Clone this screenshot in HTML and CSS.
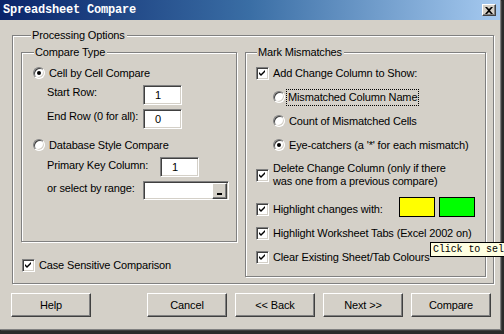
FILE: index.html
```html
<!DOCTYPE html>
<html lang="en">
  <head>
    <meta charset="UTF-8" />
    <title>Spreadsheet Compare</title>
    <link rel="stylesheet" href="styles.css">
  </head>
  <body>
    <div class="window">
      <div class="titlebar">
        <span class="title">Spreadsheet Compare</span>
        <span class="close">
          <svg width="8" height="7" viewBox="0 0 8 7">
            <path d="M0 0h2l2 2l2-2h2l-3 3.5l3 3.5h-2l-2-2l-2 2h-2l3-3.5z" fill="#000" />
          </svg>
        </span>
      </div>

      <div class="client">
        <fieldset class="group outer">
          <legend>Processing Options</legend>
          <div class="columns">
            <div class="left-col">
              <fieldset class="group compare-type">
                <legend>Compare Type</legend>

                <div class="opt first">
                  <span class="radio checked"></span>
                  <span>Cell by Cell Compare</span>
                </div>
                <div class="field">
                  <span class="caption">Start Row:</span>
                  <span class="edit">1</span>
                </div>
                <div class="field">
                  <span class="caption">End Row (0 for all):</span>
                  <span class="edit">0</span>
                </div>

                <div class="opt db">
                  <span class="radio"></span>
                  <span>Database Style Compare</span>
                </div>
                <div class="field">
                  <span class="caption wide">Primary Key Column:</span>
                  <span class="edit">1</span>
                </div>
                <div class="field">
                  <span class="caption">or select by range:</span>
                  <span class="edit range"><span class="ref-btn"><i></i></span></span>
                </div>
              </fieldset>

              <div class="opt case">
                <span class="check checked"></span>
                <span>Case Sensitive Comparison</span>
              </div>
            </div>

            <fieldset class="group mismatches">
              <legend>Mark Mismatches</legend>

              <div class="opt add">
                <span class="check checked"></span>
                <span>Add Change Column to Show:</span>
              </div>
              <div class="opt sub">
                <span class="radio"></span>
                <span class="focus">Mismatched Column Name</span>
              </div>
              <div class="opt sub">
                <span class="radio"></span>
                <span class="txt">Count of Mismatched Cells</span>
              </div>
              <div class="opt sub">
                <span class="radio checked"></span>
                <span class="txt">Eye-catchers (a '*' for each mismatch)</span>
              </div>

              <div class="opt two-line">
                <span class="check checked"></span>
                <span>Delete Change Column (only if there<br>was one from a previous compare)</span>
              </div>

              <div class="opt colours">
                <span class="check checked"></span>
                <span class="grow">Highlight changes with:</span>
                <span class="swatch" style="background: #ffff00"></span>
                <span class="swatch" style="background: #00ff00"></span>
              </div>
              <div class="opt tabs">
                <span class="check checked"></span>
                <span>Highlight Worksheet Tabs (Excel 2002 on)</span>
              </div>
              <div class="opt clear">
                <span class="check checked"></span>
                <span>Clear Existing Sheet/Tab Colours</span>
              </div>
            </fieldset>
          </div>
        </fieldset>

        <div class="buttons">
          <button type="button" class="help">Help</button>
          <button type="button" class="cancel">Cancel</button>
          <button type="button">&lt;&lt; Back</button>
          <button type="button">Next &gt;&gt;</button>
          <button type="button">Compare</button>
        </div>
      </div>

      <div class="tooltip">Click to sel</div>
    </div>
  </body>
</html>
```

FILE: styles.css
```css
html,
body {
  margin: 0;
  overflow: hidden;
  background-color: #2b2b2b;
}

body {
  width: 504px;
  height: 334px;
  font-family: "Liberation Sans", Arial, sans-serif;
  font-size: 11px;
  letter-spacing: -0.15px;
  color: #000;
}

.window {
  position: relative;
  width: 500px;
  height: 329px;
  background-color: #d4d0c8;
  border-right: 1px solid #808080;
  border-bottom: 1px solid #808080;
  box-shadow: 1px 1px 0 #404040;
}

/* title bar */
.titlebar {
  height: 20px;
  display: flex;
  align-items: flex-start;
  justify-content: space-between;
  background: linear-gradient(90deg, #0a246a 0%, #3a6ea5 50%, #a6caf0 100%);
}

.title {
  margin: 3px 0 0 3px;
  font-family: "Liberation Mono", monospace;
  font-weight: bold;
  font-size: 12px;
  line-height: 14px;
  color: #fff;
  letter-spacing: -0.2px;
}

.close {
  width: 14px;
  height: 12px;
  margin: 4px 4px 0 0;
  box-sizing: border-box;
  display: flex;
  align-items: center;
  justify-content: center;
  background-color: #d4d0c8;
  border: 1px solid;
  border-color: #fff #404040 #404040 #fff;
  box-shadow: inset -1px -1px 0 #808080;
}

/* group boxes */
.client {
  padding: 9px 0 0 12px;
}

.group {
  margin: 0;
  min-width: 0;
  box-sizing: border-box;
  border: 1px solid #808080;
  box-shadow: inset 1px 1px 0 #fff, 1px 1px 0 #fff;
}

.group legend {
  padding: 0 2px 0 1px;
  line-height: 13px;
  background-color: #d4d0c8;
}

.outer {
  width: 482px;
  padding: 4px 7px 6px 8px;
}

.outer > legend {
  margin-left: 10px;
}

.columns {
  display: grid;
  grid-template-columns: 216px 241px;
  column-gap: 8px;
  align-items: start;
}

.compare-type {
  padding: 0 0 41px 0;
}

.compare-type > legend {
  margin-left: 12px;
}

.mismatches {
  padding: 0 0 11px 0;
}

.mismatches > legend {
  margin-left: 11px;
}

/* option rows */
.opt {
  display: flex;
  align-items: center;
  height: 16px;
  line-height: 13px;
  white-space: nowrap;
}

.radio {
  position: relative;
  width: 12px;
  height: 12px;
  flex: none;
  box-sizing: border-box;
  margin-right: 4px;
  border-radius: 50%;
  background-color: #fff;
  border: 1px solid;
  border-color: #808080 #fff #fff #808080;
  box-shadow: inset 1px 1px 0 #404040, inset -1px -1px 0 #d4d0c8;
}

.radio.checked::after {
  content: "";
  position: absolute;
  left: 3px;
  top: 3px;
  width: 4px;
  height: 4px;
  border-radius: 50%;
  background-color: #000;
}

.check {
  width: 13px;
  height: 13px;
  flex: none;
  box-sizing: border-box;
  margin-right: 4px;
  background-color: #fff;
  border: 1px solid;
  border-color: #808080 #fff #fff #808080;
  box-shadow: inset 1px 1px 0 #404040, inset -1px -1px 0 #d4d0c8;
}

.check.checked {
  background: #fff url("data:image/svg+xml,%3Csvg xmlns='http://www.w3.org/2000/svg' width='11' height='11'%3E%3Cpath d='M2 4v2l2 2l4-4v-2l-4 4z' fill='black'/%3E%3C/svg%3E") no-repeat 0 0;
}

/* left column */
.compare-type .opt {
  padding-left: 11px;
}

.compare-type .first {
  margin-top: 6px;
}

.compare-type .db {
  margin-top: 8px;
}

.field {
  display: flex;
  align-items: flex-start;
  margin-top: 4px;
  padding-left: 25px;
}

.caption {
  width: 96px;
  line-height: 14px;
  white-space: nowrap;
}

.caption.wide {
  width: 113px;
  line-height: 16px;
}

.edit {
  position: relative;
  width: 39px;
  height: 20px;
  box-sizing: border-box;
  padding-left: 11px;
  line-height: 18px;
  background-color: #fff;
  border: 1px solid;
  border-color: #808080 #fff #fff #808080;
  box-shadow: inset 1px 1px 0 #404040, inset -1px -1px 0 #d4d0c8;
}

.edit.range {
  width: 86px;
  height: 19px;
  display: flex;
  justify-content: flex-end;
  padding: 1px 1px 0 0;
}

.ref-btn {
  width: 15px;
  height: 16px;
  box-sizing: border-box;
  display: flex;
  align-items: flex-end;
  justify-content: center;
  padding-bottom: 3px;
  background-color: #d4d0c8;
  border: 1px solid;
  border-color: #fff #404040 #404040 #fff;
  box-shadow: inset -1px -1px 0 #808080;
}

.ref-btn i {
  width: 5px;
  height: 2px;
  background-color: #000;
}

.case {
  margin-top: 15px;
  padding-left: 1px;
}

/* right column */
.mismatches .opt {
  padding-left: 10px;
}

.mismatches .add {
  margin-top: 6px;
}

.mismatches .sub {
  margin-top: 8px;
  padding-left: 27px;
}

.sub .radio {
  margin-right: 1px;
}

.sub .txt {
  padding-left: 3px;
}

.focus {
  padding: 1px;
  border: 1px dotted #000;
}

.two-line {
  height: 26px;
  margin-top: 9px;
}

.colours {
  height: 24px;
  margin-top: 9px;
  align-items: flex-start;
}

.colours .check {
  margin-top: 6px;
}

.colours .grow {
  width: 126px;
  margin-top: 6px;
}

.swatch {
  width: 36px;
  height: 20px;
  box-sizing: border-box;
  margin-right: 4px;
  border: 1px solid #000;
}

.tabs {
  margin-top: 4px;
}

.clear {
  margin-top: 8px;
}

/* buttons */
.buttons {
  display: flex;
  gap: 8px;
  margin-top: 9px;
  margin-left: -1px;
}

button {
  width: 80px;
  height: 24px;
  padding: 0;
  font-family: "Liberation Sans", Arial, sans-serif;
  font-size: 11px;
  letter-spacing: -0.15px;
  color: #000;
  background-color: #d4d0c8;
  border: 1px solid;
  border-color: #fff #404040 #404040 #fff;
  box-shadow: inset -1px -1px 0 #808080;
}

.help {
  margin-right: 48px;
}

/* tooltip over the colour swatches */
.tooltip {
  position: absolute;
  left: 430px;
  top: 242px;
  width: 74px;
  height: 15px;
  box-sizing: border-box;
  padding-left: 2px;
  font-family: "Liberation Mono", monospace;
  font-size: 10px;
  letter-spacing: -0.1px;
  line-height: 13px;
  white-space: nowrap;
  overflow: hidden;
  background-color: #ffffe1;
  border: 1px solid #000;
  border-right: none;
}
```
